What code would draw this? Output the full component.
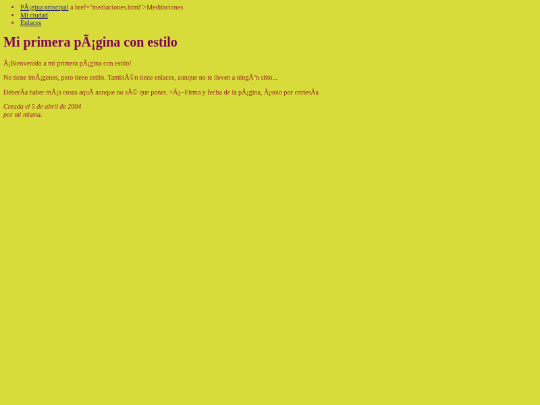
<script>
  const links = ['PÃ¡gina principal', 'Mi ciudad', 'Enlaces'];
</script>

<!-- the reference is an 800x600 page shrunk to 540x405, hence the scaled, soft page -->
<div class="frame">
  <div class="page">
    <ul class="menu">
      <li><a href="#inicio">{links[0]}</a> a href="mediaciones.html"&gt;Meditaciones</li>
      <li><a href="#ciudad">{links[1]}</a></li>
      <li><a href="#enlaces">{links[2]}</a></li>
    </ul>

    <h1>Mi primera pÃ¡gina con estilo</h1>

    <p>Ã¡Bienvenido a mi primera pÃ¡gina con estilo!</p>
    <p>No tiene imÃ¡genes, pero tiene estilo. TambiÃ©n tiene enlaces, aunque no te lleven a ningÃºn sitio...</p>
    <p>DeberÃ­a haber mÃ¡s cosas aquÃ­ aunque no sÃ© que poner. &lt;Ã¡--Firma y fecha de la pÃ¡gina, Ã¡solo por cortesÃ­a</p>

    <address>Creada el 5 de abril de 2004<br />por mi misma.</address>
  </div>
</div>

<style>
  :global(html),
  :global(body) {
    background: #d8dc3a;
  }

  .frame {
    width: 540px;
    height: 405px;
    overflow: hidden;
    filter: blur(0.5px);
  }

  .page {
    width: 800px;
    height: 600px;
    box-sizing: border-box;
    padding: 5px;
    font-family: "Liberation Serif", "Times New Roman", serif;
    font-size: 10px;
    line-height: 11.5px;
    color: #992222;
    transform: scale(0.675);
    transform-origin: 0 0;
    will-change: transform;
  }

  .menu {
    margin: 0;
    padding-left: 25px;
  }

  a {
    color: #2a2a68;
  }

  h1 {
    font-size: 20px;
    line-height: 23px;
    color: #800060;
    margin: 11px 0 14px;
  }

  p {
    margin: 10px 0;
  }

  address {
    font-style: italic;
    margin-top: 10px;
  }
</style>
